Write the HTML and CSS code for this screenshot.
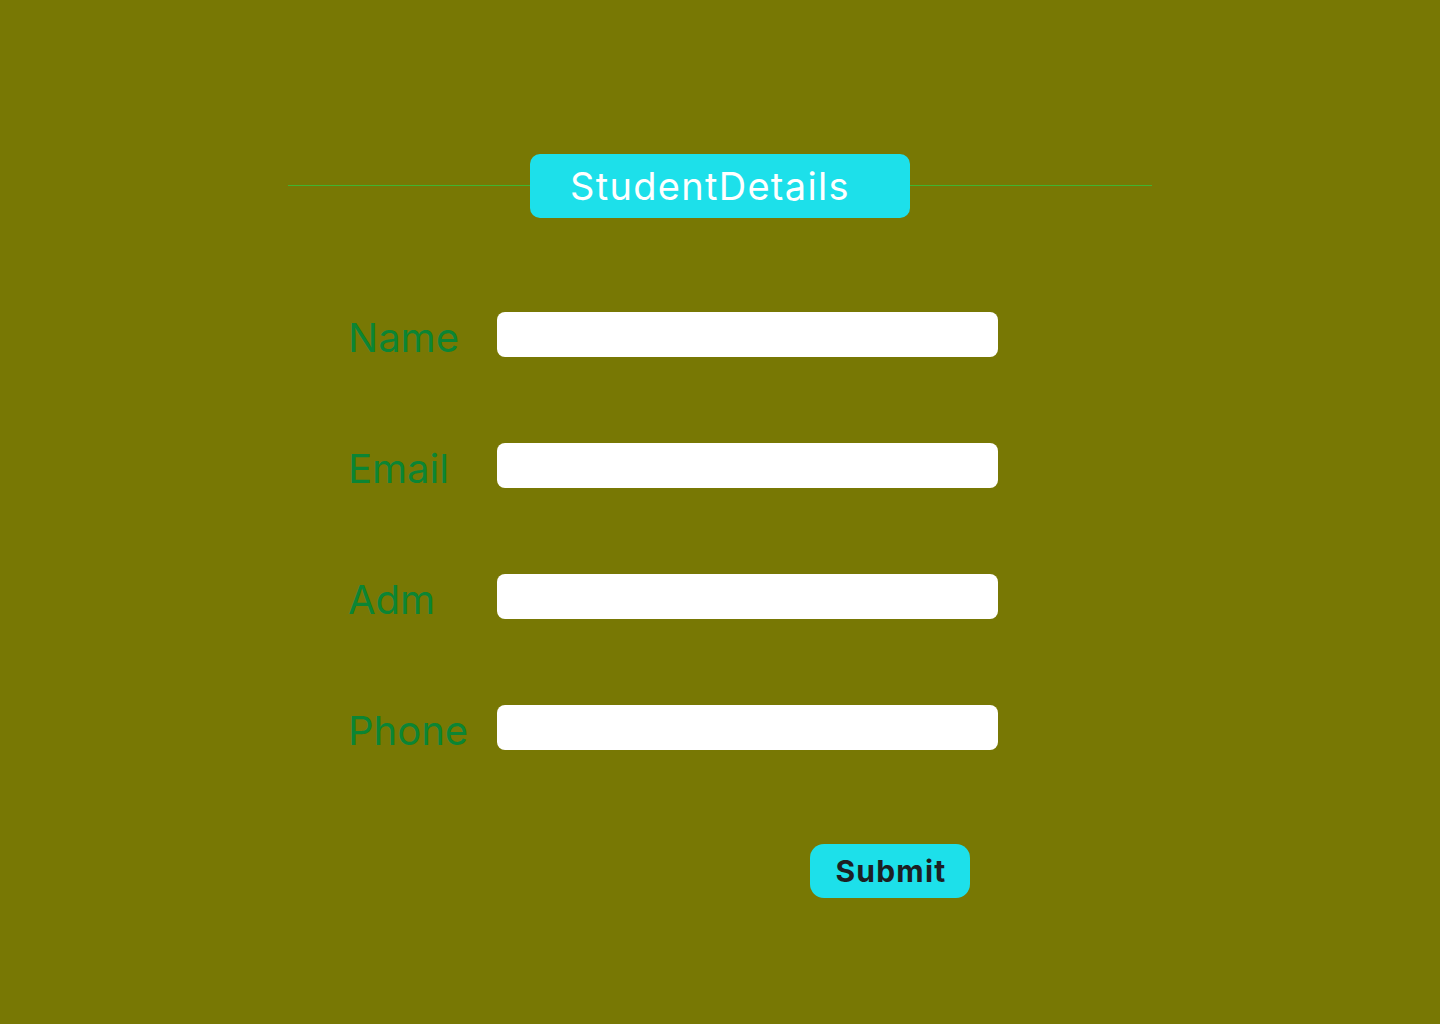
FILE: index.html
```html
<!DOCTYPE html>
<html lang="en">
<head>
<meta charset="utf-8">
<title>Student Details</title>
<link rel="stylesheet" href="styles.css">
</head>
<body>
<main class="page">
  <section class="panel">
    <header class="panel-head">
      <span class="rule"></span>
      <h1 class="badge">StudentDetails</h1>
      <span class="rule"></span>
    </header>
    <form class="form">
      <div class="row">
        <label class="label" for="name">Name</label>
        <input class="field" id="name" type="text">
      </div>
      <div class="row">
        <label class="label" for="email">Email</label>
        <input class="field" id="email" type="email">
      </div>
      <div class="row">
        <label class="label" for="adm">Adm</label>
        <input class="field" id="adm" type="text">
      </div>
      <div class="row">
        <label class="label" for="phone">Phone</label>
        <input class="field" id="phone" type="tel">
      </div>
      <div class="actions">
        <button class="submit" type="button">Submit</button>
      </div>
    </form>
  </section>
</main>
</body>
</html>
```

FILE: styles.css
```css
* { box-sizing: border-box; }
html, body {
  margin: 0;
  padding: 0;
  background: #787804;
  font-family: Inter, "Noto Sans", sans-serif;
}
.page {
  min-height: 1024px;
  padding-top: 154px;
  display: flex;
  justify-content: center;
}
.panel {
  width: 864px;
}
.panel-head {
  display: flex;
  align-items: center;
}
.rule {
  flex: 1;
  height: 1px;
  background: #3fb530;
  margin-top: -1px;
}
.badge {
  margin: 0;
  width: 380px;
  height: 64px;
  padding-left: 40px;
  display: flex;
  align-items: center;
  background: #1de0ea;
  border-radius: 10px;
  color: #ffffff;
  font-size: 38px;
  font-weight: 400;
  letter-spacing: 1.3px;
}
.form {
  margin-top: 94px;
  padding-left: 60px;
  display: flex;
  flex-direction: column;
  gap: 86px;
}
.row {
  display: flex;
  align-items: center;
  height: 45px;
}
.label {
  width: 149px;
  padding-top: 6px;
  color: #0b8534;
  font-size: 40px;
  line-height: 48px;
}
.field {
  width: 501px;
  height: 45px;
  border: none;
  border-radius: 8px;
  background: #ffffff;
  outline: none;
  padding: 0 12px;
  font-family: inherit;
}
.actions {
  margin-top: 8px;
  padding-left: 462px;
}
.submit {
  width: 160px;
  height: 54px;
  border: none;
  border-radius: 14px;
  background: #1de0ea;
  color: #1c1f24;
  font-family: inherit;
  font-size: 30px;
  font-weight: 700;
  letter-spacing: 1.2px;
  padding: 0 0 0 2px;
}
```
